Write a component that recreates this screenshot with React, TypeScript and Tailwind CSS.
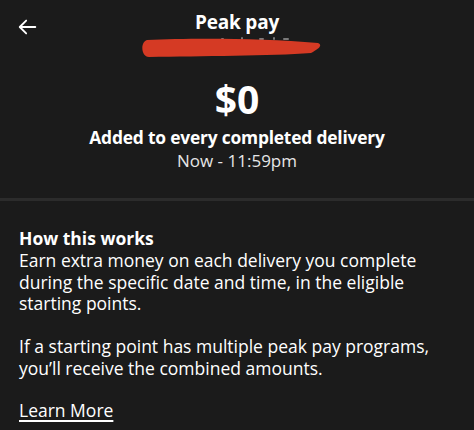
export default function App() {
  return (
    <div
      className="w-[474px] h-[430px] overflow-hidden bg-[#1b1b1b] text-white"
      style={{ fontFamily: "'Open Sans', 'Noto Sans', sans-serif" }}
    >
      {/* Header */}
      <div className="relative h-[64px]">
        <button className="absolute left-[17px] top-[16px] text-white">
          <svg width="22" height="22" viewBox="0 0 24 24" fill="none" stroke="currentColor" strokeWidth="2" strokeLinecap="round" strokeLinejoin="round">
            <path d="M20 12H4" />
            <path d="M10 5l-7 7 7 7" />
          </svg>
        </button>
        <div className="flex flex-col items-center pt-[9px]">
          <h1 className="text-[19px] font-bold leading-[26px] tracking-[-0.2px]">Peak pay</h1>
          <svg className="ml-[-10px] mt-[2px]" width="182" height="22" viewBox="0 0 182 22">
            {/* faint redacted subtitle peeking out */}
            <g fill="#7a7a7a">
              <rect x="80" y="1" width="3" height="2" rx="1" />
              <rect x="100" y="0" width="2" height="3" rx="1" />
              <rect x="118" y="1" width="5" height="2" rx="1" />
              <rect x="132" y="0" width="2" height="3" rx="1" />
              <rect x="142" y="1" width="6" height="2" rx="1" />
            </g>
            <path
              d="M6 3 C 50 1, 120 1, 177 6 C 182 8, 178 12, 170 16 C 130 19, 60 19, 8 20 C 0 20, -1 5, 6 3 Z"
              fill="#d53a24"
            />
          </svg>
        </div>
      </div>

      {/* Amount */}
      <div className="flex flex-col items-center pt-[13px]">
        <div className="text-[39px] font-bold leading-[44px]">$0</div>
        <div className="mt-[4px] text-[17.4px] font-bold leading-[24px] tracking-[-0.2px]">Added to every completed delivery</div>
        <div className="text-[17px] leading-[24px] text-[#e6e6e6]">Now - 11:59pm</div>
      </div>

      <div className="mt-[25px] h-[3px] bg-[#2c2c2c]" />

      {/* How it works */}
      <div className="px-[19px] pt-[25px] text-[17.5px] leading-[21.7px]">
        <div className="font-bold leading-[24px]">How this works</div>
        <p className="w-[440px]">
          Earn extra money on each delivery you complete during the specific date and time, in the eligible starting points.
        </p>
        <p className="mt-[21px] w-[440px]">
          If a starting point has multiple peak pay programs, you’ll receive the combined amounts.
        </p>
        <a className="mt-[20px] inline-block underline underline-offset-[3px] decoration-[1.5px]" href="#">
          Learn More
        </a>
      </div>
    </div>
  );
}
